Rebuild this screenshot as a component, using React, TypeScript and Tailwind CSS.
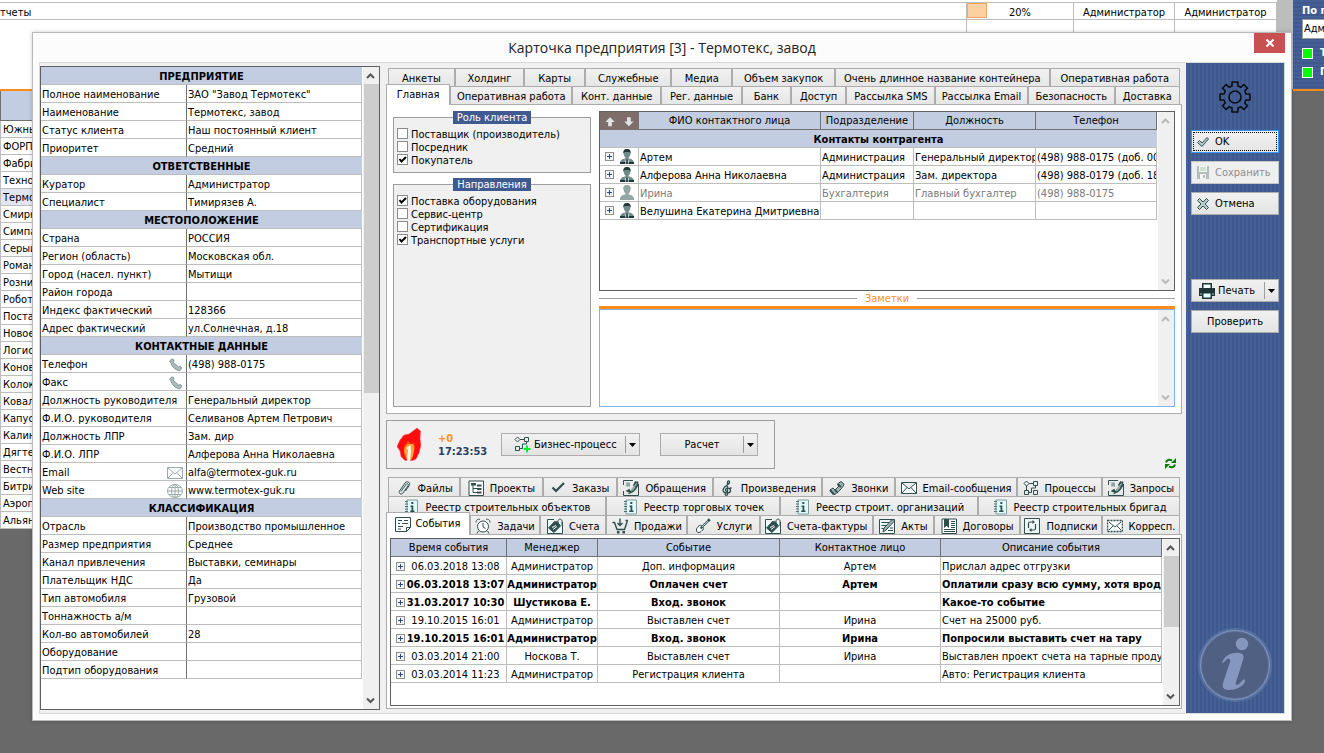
import type { ReactNode } from "react";

type IconName =
  | "clip" | "tree" | "check" | "request" | "clef" | "phone" | "mail" | "flow" | "book"
  | "events" | "clock" | "invoice" | "cart" | "guitar" | "act" | "contract" | "cycle" | "letter";

type Tab = { label: string; w: number; icon?: IconName; active?: boolean };

type InfoRow = { label: string; value?: string; icon?: "handset" | "mail" | "globe" };
type InfoGroup = { title: string; rows: InfoRow[] };

const companies = [
  "Южны", "ФОРП", "Фабри", "Техно", "Термо", "Смирн", "Симпа", "Серый",
  "Роман", "Розни", "Робот", "Поста", "Новое", "Логис", "Конов", "Колок",
  "Ковал", "Капус", "Калин", "Дягте", "Вестн", "Битри", "Аэроп", "Альян",
];

const info: InfoGroup[] = [
  {
    title: "ПРЕДПРИЯТИЕ",
    rows: [
      { label: "Полное наименование", value: 'ЗАО "Завод Термотекс"' },
      { label: "Наименование", value: "Термотекс, завод" },
      { label: "Статус клиента", value: "Наш постоянный клиент" },
      { label: "Приоритет", value: "Средний" },
    ],
  },
  {
    title: "ОТВЕТСТВЕННЫЕ",
    rows: [
      { label: "Куратор", value: "Администратор" },
      { label: "Специалист", value: "Тимирязев А." },
    ],
  },
  {
    title: "МЕСТОПОЛОЖЕНИЕ",
    rows: [
      { label: "Страна", value: "РОССИЯ" },
      { label: "Регион (область)", value: "Московская обл." },
      { label: "Город (насел. пункт)", value: "Мытищи" },
      { label: "Район города" },
      { label: "Индекс фактический", value: "128366" },
      { label: "Адрес фактический", value: "ул.Солнечная, д.18" },
    ],
  },
  {
    title: "КОНТАКТНЫЕ ДАННЫЕ",
    rows: [
      { label: "Телефон", value: "(498) 988-0175", icon: "handset" },
      { label: "Факс", icon: "handset" },
      { label: "Должность руководителя", value: "Генеральный директор" },
      { label: "Ф.И.О. руководителя", value: "Селиванов Артем Петрович" },
      { label: "Должность ЛПР", value: "Зам. дир" },
      { label: "Ф.И.О. ЛПР", value: "Алферова Анна Николаевна" },
      { label: "Email", value: "alfa@termotex-guk.ru", icon: "mail" },
      { label: "Web site", value: "www.termotex-guk.ru", icon: "globe" },
    ],
  },
  {
    title: "КЛАССИФИКАЦИЯ",
    rows: [
      { label: "Отрасль", value: "Производство промышленное" },
      { label: "Размер предприятия", value: "Среднее" },
      { label: "Канал привлечения", value: "Выставки, семинары" },
      { label: "Плательщик НДС", value: "Да" },
      { label: "Тип автомобиля", value: "Грузовой" },
      { label: "Тоннажность а/м" },
      { label: "Кол-во автомобилей", value: "28" },
      { label: "Оборудование" },
      { label: "Подтип оборудования" },
    ],
  },
];

const topTabs: Tab[][] = [
  [
    { label: "Анкеты", w: 66 },
    { label: "Холдинг", w: 69 },
    { label: "Карты", w: 60 },
    { label: "Служебные", w: 86 },
    { label: "Медиа", w: 60 },
    { label: "Объем закупок", w: 103 },
    { label: "Очень длинное название контейнера", w: 217 },
    { label: "Оперативная работа", w: 131 },
  ],
  [
    { label: "Главная", w: 64, active: true },
    { label: "Оперативная работа", w: 123 },
    { label: "Конт. данные", w: 89 },
    { label: "Рег. данные", w: 81 },
    { label: "Банк", w: 48 },
    { label: "Доступ", w: 55 },
    { label: "Рассылка SMS", w: 89 },
    { label: "Рассылка Email", w: 93 },
    { label: "Безопасность", w: 87 },
    { label: "Доставка", w: 65 },
  ],
];

const bottomTabs: Tab[][] = [
  [
    { label: "Файлы", w: 72, icon: "clip" },
    { label: "Проекты", w: 82, icon: "tree" },
    { label: "Заказы", w: 74, icon: "check" },
    { label: "Обращения", w: 96, icon: "request" },
    { label: "Произведения", w: 110, icon: "clef" },
    { label: "Звонки", w: 73, icon: "phone" },
    { label: "Email-сообщения", w: 122, icon: "mail" },
    { label: "Процессы", w: 85, icon: "flow" },
    { label: "Запросы", w: 78, icon: "request" },
  ],
  [
    { label: "Реестр строительных объектов", w: 218, icon: "book" },
    { label: "Реестр торговых точек", w: 174, icon: "book" },
    { label: "Реестр строит. организаций", w: 198, icon: "book" },
    { label: "Реестр строительных бригад", w: 202, icon: "book" },
  ],
  [
    { label: "События", w: 84, icon: "events", active: true },
    { label: "Задачи", w: 70, icon: "clock" },
    { label: "Счета", w: 66, icon: "invoice" },
    { label: "Продажи", w: 81, icon: "cart" },
    { label: "Услуги", w: 72, icon: "guitar" },
    { label: "Счета-фактуры", w: 114, icon: "invoice" },
    { label: "Акты", w: 61, icon: "act" },
    { label: "Договоры", w: 86, icon: "contract" },
    { label: "Подписки", w: 82, icon: "cycle" },
    { label: "Корресп.", w: 78, icon: "letter" },
  ],
];

const contacts = [
  { name: "Артем", dept: "Администрация", post: "Генеральный директор", phone: "(498) 988-0175 (доб. 00" },
  { name: "Алферова Анна Николаевна", dept: "Администрация", post: "Зам. директора", phone: "(498) 988-0179 (доб. 18" },
  { name: "Ирина", dept: "Бухгалтерия", post: "Главный бухгалтер", phone: "(498) 988-0175", muted: true },
  { name: "Велушина Екатерина Дмитриевна", dept: "", post: "", phone: "" },
];

const events = [
  { time: "06.03.2018 13:08", manager: "Администратор", event: "Доп. информация", contact: "Артем", text: "Прислал адрес отгрузки" },
  { time: "06.03.2018 13:07", manager: "Администратор", event: "Оплачен счет", contact: "Артем", text: "Оплатили сразу всю сумму, хотя врод", bold: true },
  { time: "31.03.2017 10:30", manager: "Шустикова Е.", event: "Вход. звонок", contact: "", text: "Какое-то событие", bold: true },
  { time: "19.10.2015 16:01", manager: "Администратор", event: "Выставлен счет", contact: "Ирина", text: "Счет на 25000 руб." },
  { time: "19.10.2015 16:01", manager: "Администратор", event: "Вход. звонок", contact: "Ирина", text: "Попросили выставить счет на тару", bold: true },
  { time: "03.03.2014 21:00", manager: "Носкова Т.", event: "Выставлен счет", contact: "Ирина", text: "Выставлен проект счета на тарные продун" },
  { time: "03.03.2014 11:23", manager: "Администратор", event: "Регистрация клиента", contact: "", text: "Авто: Регистрация клиента" },
];

const roles = [
  { label: "Поставщик (производитель)", on: false },
  { label: "Посредник", on: false },
  { label: "Покупатель", on: true },
];

const directions = [
  { label: "Поставка оборудования", on: true },
  { label: "Сервис-центр", on: false },
  { label: "Сертификация", on: false },
  { label: "Транспортные услуги", on: true },
];

const flowShapes = (
  <path d="M1 3.500 3.500 1 6 3.500 3.500 6ZM10.500 1.500h4v4h-4zM1.500 10.500h4v4h-4zM6 3.500h4.500M12.500 5.500v2.500h-4v4.500h-3" />
);

const iconShapes: Record<IconName, ReactNode> = {
  clip: <path d="M5 11.500 10 4.500c1-1.500 3-.5 2.200 1L7 13c-1.500 2.300-5 .5-3.500-2L9 3c2-2.800 6-.5 4.200 2.500L9.500 11" />,
  tree: (
    <>
      <path d="M1 1h14.500v14.500H1z" fill="#fff" />
      <path d="M5 5v7.500h4M5 8.500h4" />
      <path d="M3 3h5v2.500H3zM9 4.500h4.500v2H9zM9 8h4.500v2H9zM9 11.500h4.500v2H9z" fill="#2f4f4f" stroke="none" />
    </>
  ),
  check: <path d="M2.500 7.500 6 11l8-8" strokeWidth="2.200" />,
  request: (
    <>
      <path d="M.5 5V.5H10M15.500 4v11.500H.500V11" />
      <path d="M2 2.500h5v5L5.500 6 4 7 2.500 5 4 4Z" fill="#8fa3a3" stroke="none" />
      <path d="M14.500 1.500c.5 5-3 10.500-9 12M13 1.500 11 5l1.500 1.500M3.500 11.500 6 10l2 2.500" strokeWidth="1.800" />
      <path d="M12.500 5 8 11" stroke="#8fa3a3" strokeWidth="1.500" />
    </>
  ),
  clef: <path d="M8.500 15c-2 1-3-1-2-2M8.500 15V2c0-1.500 2.500-1.500 2 .5C10 5 4 6.500 4 10c0 3.500 7 4 7.500.8C12 8 6.500 7 6.500 10c0 1 1 1.500 1.500 1.500M11 8h1.500" strokeWidth="1.300" />,
  phone: (
    <>
      <path d="M1 10 4 8l2 2 4-4-1.500-2L12 1.500 15 4c.5 2-8 11-10 10.500Z" fill="#9fb3b3" />
      <path d="m1 10 4 4.500M8.500 4 12 7M6 10l2 2" strokeWidth="2" />
    </>
  ),
  mail: <path d="M.5 2.500h15v11H.500zM1 3l7 6 7-6M1 13l5-5.500M15 13l-5-5.500" fill="#fbffff" />,
  flow: (
    <>
      {flowShapes}
      <path d="M10.500 10.500h4v4h-4zM3.500 6v4.500" />
    </>
  ),
  book: (
    <>
      <path d="M4 1h10.500v14H4z" fill="#dffafa" stroke="#7f9b9b" />
      <path d="M2 2.500h3M2 5h3M2 7.500h3M2 10h3M2 12.500h3" stroke="#557070" />
      <path d="M8.300 3h2v2h-2zM7.500 6.500h2.800v5h1.200V13H7.200v-1.500h1.300V8h-1z" fill="#2f4f4f" stroke="none" />
    </>
  ),
  events: (
    <>
      <path d="M.5 1.500h15v10l-4 4H.500z" fill="#fff" />
      <path d="M15.500 11.500h-4v4M3 4.500h4M9 4.500h4M3 7.500h2M7 7.500h6M3 10.500h5M3 13h3" />
    </>
  ),
  clock: (
    <>
      <circle cx="8" cy="8.500" r="5.500" fill="#fff" />
      <path d="M8 5v4l2.500 1.500M1 4.500C1 2 3 .5 5 1.500M15 4.500c0-2.500-2-4-4-3M3.500 13 2 15.500M12.500 13l1.500 2.500" />
    </>
  ),
  invoice: (
    <>
      <path d="M.5 4v11.500h15V4M.500 4V1.500H7M15.500 4v7" fill="#f4ffff" />
      <path d="m1.500 10 6-6.500 3 .5 3 4-6.500 6.500z" fill="#2f4f4f" />
      <path d="M11 7V3c0-2.500 4-2.500 4 0v5M7 8l2 2" />
      <path d="m5 9.500 4-2M6 11.500l4-3" stroke="#fff" />
    </>
  ),
  cart: (
    <>
      <path d="M.5 4.500h2l2.500 7h7.500l3-9h-2M8 .500v6M5.500 5 8 7.500 10.500 5" strokeWidth="1.400" />
      <path d="M5 13h2.500v2.500H5zM10.500 13H13v2.500h-2.500z" fill="#2f4f4f" stroke="none" />
    </>
  ),
  guitar: (
    <>
      <path d="M1.500 12c-.5-2 1.500-2 2-4 2-2 6 1 4.500 4-2 .5-2 2.500-4 2.500C2.500 15 1.500 13.500 1.500 12Z" fill="#fff" />
      <path d="m5.500 10.500 8-8M13 1l2 2" strokeWidth="2" />
      <path d="m7 9 6-6" stroke="#b9cccc" />
    </>
  ),
  act: (
    <>
      <path d="M.5 1.500h15v14H.500z" fill="#eef6f6" />
      <path d="M2.500 4.500h8M2.500 7.500h5M2.500 10.500h3M9 12.500h5M11 10h3" />
      <path d="m4 14 1-4 8-8.500 2 2L7 12z" fill="#9fb3b3" />
    </>
  ),
  contract: (
    <>
      <path d="M1 1h14.500v14.500H1z" fill="#fff" />
      <path d="M3 1h5v9L5.500 8 3 10z" fill="#2f4f4f" stroke="none" />
      <path d="M10 3.500h4M10 5.500h4M10 7.500h4M10 9.500h4M3 11.500h11M3 13.500h11" />
    </>
  ),
  cycle: (
    <>
      <path d="M.5.500h15v15H.500z" fill="#eef6f6" />
      <path d="M4.500 10V5.500c0-1 .5-1.500 1.500-1.500h3M11.500 6v4.500c0 1-.5 1.500-1.500 1.500H7" strokeWidth="1.200" />
      <path d="M8.500 2v4L11 4zM7.500 10v4L5 12z" fill="#2f4f4f" stroke="none" />
    </>
  ),
  letter: (
    <>
      <path d="M.5 2.500h15v11H.500z" fill="#fff" strokeDasharray="2 1" strokeWidth="1.600" />
      <path d="m2 4 6 5 6-5M2 12l4-4M14 12l-4-4" />
    </>
  ),
};

function TabIcon({ name }: { name: IconName }) {
  return (
    <svg viewBox="0 0 16 16" className="w-4 h-4 shrink-0" fill="none" stroke="#2f4f4f" strokeWidth="1">
      {iconShapes[name]}
    </svg>
  );
}

function FieldIcon({ name }: { name: "handset" | "mail" | "globe" }) {
  return (
    <svg viewBox="0 0 16 14" className="w-4 h-3.5" fill="none" stroke="#9aabab" strokeWidth="1">
      {name === "handset" && (
        <path d="M2.500 3 5 .800 7 2 6.500 4.500 11.500 9l2-.5L15 10l-2.500 3-2.500-1C7.500 11 4.500 8 4 5Z" fill="#a9baba" stroke="#8a9c9c" />
      )}
      {name === "mail" && <path d="M.5 1.500h15v11H.500zM1 2l7 6 7-6M1 12l5-5M15 12l-5-5" />}
      {name === "globe" && (
        <>
          <ellipse cx="8" cy="7" rx="7.500" ry="6.500" />
          <ellipse cx="8" cy="7" rx="3.500" ry="6.500" />
          <path d="M8 .500v13M.500 7h15M2 3.500h12M2 10.500h12" />
        </>
      )}
    </svg>
  );
}

function PersonIcon({ muted }: { muted?: boolean }) {
  const dark = muted ? "#93a5a5" : "#1f3838";
  const mid = muted ? "#93a5a5" : "#6f8a8a";
  return (
    <svg viewBox="0 0 14 15" className="w-3.5 h-[15px]">
      <path d="M0 15c0-3 1-4.500 4.500-5.500h5C13 10.500 14 12 14 15z" fill={mid} />
      <path d="M3.500 3.500C3.500 1 5 0 7 0s3.500 1 3.500 3.500c0 3-1.500 5.500-3.500 5.500S3.500 6.500 3.500 3.500Z" fill={mid} />
      <path d="M5.500 8h3v3h-3z" fill={mid} />
      <path d="M3.500 4.500C3 1 5 0 7 0s4 1 3.500 4.500C9.500 2.500 8.500 3 7 3s-2.500-.5-3.500 1.500ZM0 15v-2h14v2z" fill={dark} />
      <path d="m4.500 9.500 2 3h1l2-3L8.500 15h-3z" fill={muted ? "#93a5a5" : "#c9d6d6"} />
      <path d="M6.500 10.500h1L8 15H6z" fill={dark} />
    </svg>
  );
}

function Expander() {
  return (
    <button type="button" aria-label="Развернуть" className="block w-[9px] h-[9px] shrink-0 border border-[#8f8f8f] bg-[#f4f4f4]">
      <svg viewBox="0 0 7 7" className="w-[7px] h-[7px]" stroke="#2f4a8c" strokeWidth="1">
        <path d="M1 3.500h5M3.500 1v5" />
      </svg>
    </button>
  );
}

function ScrollBar({ thumb, faded }: { thumb?: string; faded?: boolean }) {
  const color = faded ? "#b9b9b9" : "#555";
  return (
    <div className="w-4 shrink-0 bg-[#f0f0f0] flex flex-col items-center">
      <svg viewBox="0 0 16 17" className="w-4 h-[17px]" fill="none" stroke={color} strokeWidth="2">
        <path d="m4 11 3.500-3.500L11 11" />
      </svg>
      {thumb && <div className={`w-[15px] bg-[#cdcdcd] ${thumb}`} />}
      <svg viewBox="0 0 16 17" className="w-4 h-[17px] mt-auto" fill="none" stroke={color} strokeWidth="2">
        <path d="m4 6.500 3.500 3.500L11 6.500" />
      </svg>
    </div>
  );
}

function TabRow({ tabs, tall }: { tabs: Tab[]; tall?: boolean }) {
  return (
    <div className={`flex items-end ${tall ? "h-[19px]" : "h-[18px]"} ${tabs[0].active ? "-ml-0.5" : ""}`} role="tablist">
      {tabs.map((tab, i) => (
        <button
          key={i}
          type="button"
          role="tab"
          aria-selected={!!tab.active}
          style={{ flexGrow: tab.w }}
          className={
            tab.active
              ? `relative z-10 basis-0 min-w-0 flex items-center justify-center gap-1 -mb-px bg-white border border-b-0 border-[#acacac] ${tall ? "h-[23px]" : "h-[21px]"}`
              : `basis-0 min-w-0 h-full flex items-center justify-center border border-b-0 border-[#acacac] bg-linear-to-b from-[#f1f1f1] to-[#e6e6e6] pt-px ${tall ? "gap-1.5" : ""}`
          }
        >
          {tab.icon && <TabIcon name={tab.icon} />}
          <span className={tab.active ? "" : "pt-0.5"}>{tab.label}</span>
        </button>
      ))}
    </div>
  );
}

function CheckGroup({ title, items, className }: { title: string; items: { label: string; on: boolean }[]; className: string }) {
  return (
    <fieldset className={`border border-[#9d9d9d] bg-[#f0f0f0] px-[3px] pt-[3px] pb-1.5 ${className}`}>
      <legend className="mx-auto h-[13px] px-1 leading-[14px] bg-[#3f5a8f] text-white">{title}</legend>
      {items.map((item) => (
        <label key={item.label} className="flex items-center h-[13px] gap-[3px] whitespace-nowrap">
          <span className="relative flex w-[11px] h-[11px]">
            <input
              type="checkbox"
              defaultChecked={item.on}
              className="peer appearance-none w-[11px] h-[11px] border border-[#8c8c8c] bg-white"
            />
            <svg viewBox="0 0 11 11" className="absolute inset-0 hidden peer-checked:block pointer-events-none" fill="none" stroke="#000" strokeWidth="2">
              <path d="M2.500 5 4.500 7.500 9 3" />
            </svg>
          </span>
          <span className="pt-0.5">{item.label}</span>
        </label>
      ))}
    </fieldset>
  );
}

type ActionButtonProps = {
  children: ReactNode;
  className?: string;
  tone?: "normal" | "focused" | "disabled";
};

function ActionButton({ children, className = "", tone = "normal" }: ActionButtonProps) {
  const tones = {
    normal: "border-[#acacac] from-[#f1f1f1] to-[#e4e4e4]",
    focused: "border-[#3399ff] from-[#f1f1f1] to-[#e4e4e4]",
    disabled: "border-[#c6c6c6] from-[#efefef] to-[#efefef] text-[#8e8e8e]",
  };
  return (
    <button
      type="button"
      disabled={tone === "disabled"}
      className={`flex items-center h-[23px] border bg-linear-to-b ${tones[tone]} ${className}`}
    >
      {children}
    </button>
  );
}

function DropArrow() {
  return (
    <span className="ml-auto h-[17px] w-3.5 pl-px pr-px flex items-center justify-center border-l border-[#9d9d9d]">
      <svg viewBox="0 0 7 4" className="w-[7px] h-1">
        <path d="M0 0h7L3.500 4z" />
      </svg>
    </span>
  );
}

function Backdrop() {
  const cell = "h-[17px] border-b border-r border-[#bdbdbd] bg-white leading-[19px]";
  return (
    <div className="absolute inset-0 flex items-start">
      <div className="flex-1 min-w-0">
        <div className="flex flex-col h-[89px] bg-white">
          <div className="flex h-[3px] border-b border-[#bdbdbd]" />
          <div className="flex text-center whitespace-nowrap">
            <div className={`${cell} flex-1 text-left`}>тчеты</div>
            <div className={`${cell} w-[107px] relative`}>
              <span className="absolute left-0 top-0 w-5 h-[15px] bg-[#fdd0a2] border border-[#f0a868]" />
              20%
            </div>
            <div className={`${cell} w-[101px]`}>Администратор</div>
            <div className={`${cell} w-[102px]`}>Администратор</div>
          </div>
          <div className="flex flex-1">
            <div className="flex-1 border-r border-[#bdbdbd]" />
            <div className="w-[107px] border-r border-[#bdbdbd]" />
            <div className="w-[101px] border-r border-[#bdbdbd]" />
            <div className="w-[102px] border-r border-[#bdbdbd]" />
          </div>
        </div>
        <div className="w-9 border-t-2 border-[#ff8c1a]">
          <div className="h-[30px] bg-[#c3cde2] border-l border-b border-[#707070]" />
          <ul className="whitespace-nowrap leading-[18px]">
            {companies.map((name, i) => (
              <li key={name} className={`h-[17px] pl-0.5 border-l border-b border-[#bdbdbd] ${i === 4 ? "bg-[#e1e5f2]" : "bg-white"}`}>
                {name}
              </li>
            ))}
          </ul>
        </div>
      </div>
      <div className="w-4 h-[89px] bg-[#bdbdbd]" />
      <div className="w-[31px] h-[91px] overflow-hidden pl-[9px] text-white whitespace-nowrap border-b-2 border-[#ff8c1a] bg-[repeating-linear-gradient(180deg,#456096_0px,#456096_2px,#3f598c_2px,#3f598c_4px)]">
        <div className="pt-[3px] font-bold">По п</div>
        <div className="h-5 border border-r-0 border-[#9d9d9d] bg-white pl-px leading-[18px] text-black">Адм</div>
        <div className="mt-1.5 flex items-center gap-[7px] h-4">
          <span className="w-[11px] h-[11px] border border-white bg-[#00ff00] shrink-0" />
          <b>Т</b>
        </div>
        <div className="mt-[3px] flex items-center gap-[7px] h-4">
          <span className="w-[11px] h-[11px] border border-white bg-[#00ff00] shrink-0" />
          <b>П</b>
        </div>
      </div>
    </div>
  );
}

function InfoPanel() {
  return (
    <div className="w-[340px] shrink-0 flex border border-[#606060] bg-white">
      <div className="flex-1 min-w-0 pr-px">
        <table className="w-full table-fixed border-separate border-spacing-0 leading-[15px]">
          <colgroup>
            <col className="w-[146px]" />
            <col />
          </colgroup>
          {info.map((group) => (
            <tbody key={group.title}>
              <tr>
                <th colSpan={2} className="h-[18px] p-0 pt-0.5 bg-[#c3cde2] border-b border-[#bdbdbd]">{group.title}</th>
              </tr>
              {group.rows.map((row) => (
                <tr key={row.label}>
                  <th scope="row" className="h-[18px] p-0 pt-0.5 pl-px font-normal text-left whitespace-nowrap border-b border-r border-b-[#bdbdbd] border-r-[#707070]">
                    <span className="flex items-center justify-between pr-[3px]">
                      {row.label}
                      {row.icon && <FieldIcon name={row.icon} />}
                    </span>
                  </th>
                  <td className="h-[18px] p-0 pt-0.5 pl-px whitespace-nowrap border-b border-r border-[#bdbdbd]">{row.value}</td>
                </tr>
              ))}
            </tbody>
          ))}
        </table>
      </div>
      <ScrollBar thumb="h-[309px]" />
    </div>
  );
}

function ContactsTable() {
  const head = "h-[18px] p-0 font-normal border-r border-b border-[#707070] bg-[#c3cde2]";
  const cell = "h-[18px] p-0 pt-0.5 pl-px overflow-hidden whitespace-nowrap border-r border-b border-[#bdbdbd]";
  return (
    <div className="h-[180px] flex border border-[#606060] bg-white">
      <div className="flex-1 min-w-0 pr-px">
        <table className="w-full table-fixed border-separate border-spacing-0 leading-[15px]">
          <colgroup>
            <col className="w-[39px]" />
            <col className="w-[182px]" />
            <col className="w-[93px]" />
            <col className="w-[122px]" />
            <col />
          </colgroup>
          <thead>
            <tr>
              <th className="h-[18px] p-0 bg-[#7d6e69]">
                <svg viewBox="0 0 38 18" className="w-[38px] h-[17px]" fill="#e2e2e2">
                  <path d="m9.500 4.500 5 5h-3V14h-4V9.500h-3zM29.500 14l-5-5h3V4.500h4V9h3z" />
                </svg>
              </th>
              <th className={head}>ФИО контактного лица</th>
              <th className={head}>Подразделение</th>
              <th className={head}>Должность</th>
              <th className={head}>Телефон</th>
            </tr>
          </thead>
          <tbody>
            <tr>
              <th colSpan={5} className="h-[18px] p-0 pt-0.5 bg-[#c3cde2] border-b border-[#bdbdbd]">Контакты контрагента</th>
            </tr>
            {contacts.map((c) => (
              <tr key={c.name} className={c.muted ? "text-[#7a7a7a]" : ""}>
                <td className="h-[18px] p-0 pl-px border-r border-b border-[#bdbdbd]">
                  <span className="flex items-center gap-1.5 pl-1">
                    <Expander />
                    <PersonIcon muted={c.muted} />
                  </span>
                </td>
                <td className={cell}>{c.name}</td>
                <td className={cell}>{c.dept}</td>
                <td className={cell}>{c.post}</td>
                <td className={cell}>{c.phone}</td>
              </tr>
            ))}
          </tbody>
        </table>
      </div>
      <ScrollBar faded />
    </div>
  );
}

function EventsTable() {
  const head = "h-[18px] p-0 font-normal border-r border-b border-[#707070] bg-[#c3cde2]";
  const cell = "h-[18px] p-0 pt-0.5 overflow-hidden whitespace-nowrap border-r border-b border-[#bdbdbd]";
  return (
    <div className="flex-1 flex border border-[#606060] bg-white">
      <div className="flex-1 min-w-0 pr-px">
        <table className="w-full table-fixed border-separate border-spacing-0 text-center leading-[15px]">
          <colgroup>
            <col className="w-[116px]" />
            <col className="w-[91px]" />
            <col className="w-[182px]" />
            <col className="w-[161px]" />
            <col />
          </colgroup>
          <thead>
            <tr>
              <th className={head}>Время события</th>
              <th className={head}>Менеджер</th>
              <th className={head}>Событие</th>
              <th className={head}>Контактное лицо</th>
              <th className={head}>Описание события</th>
            </tr>
          </thead>
          <tbody>
            {events.map((e, i) => (
              <tr key={i} className={e.bold ? "font-bold" : ""}>
                <td className={cell}>
                  <span className="flex items-center pl-[5px]">
                    <Expander />
                    <span className="flex-1">{e.time}</span>
                  </span>
                </td>
                <td className={cell}>{e.manager}</td>
                <td className={cell}>{e.event}</td>
                <td className={cell}>{e.contact}</td>
                <td className={`${cell} text-left pl-px`}>{e.text}</td>
              </tr>
            ))}
          </tbody>
        </table>
      </div>
      <ScrollBar thumb="h-[71px]" />
    </div>
  );
}

function Flame() {
  return (
    <svg viewBox="0 0 24 33" className="w-6 h-[33px]">
      <path d="M20 0 23.500 3l-.5 8 1 6-2 8-3 6-3 1.500H8L4 28.500 3 23 0 18.500 3 12l4-5 5-1 4-3z" fill="#ff0d0d" stroke="#ff4a6a" strokeWidth="0.500" />
      <path d="m11 13 3 3 3-1 1 5-2 8-4 3H9l-2-5v-7l2-3z" fill="#ff5410" />
      <path d="m11 16 5 0 1 5-1 7-2 4h-4l-1-4-2-5 1-4z" fill="#ffa23a" />
      <path d="m9.500 20 4-3 .5 6-1 10h-3l1-11z" fill="#fffbe6" />
    </svg>
  );
}

function ToolStrip() {
  return (
    <div className="mt-1.5 flex items-end justify-between">
      <div className="w-[389px] h-[49px] flex items-center pl-2.5 border border-[#9d9d9d]">
        <Flame />
        <div className="w-[62px] ml-[17px] mr-px font-bold leading-[13px]">
          <div className="text-[#ff9026]">+0</div>
          <div className="text-[#2c3f63]">17:23:53</div>
        </div>
        <ActionButton className="w-[139px] justify-center pl-3">
          <svg viewBox="0 0 17 17" className="w-[17px] h-[17px] mr-[3px]" fill="none" stroke="#2f4f4f">
            {flowShapes}
            <path d="M13 9.500v7M9.500 13h7" stroke="#00f02c" strokeWidth="2" />
          </svg>
          Бизнес-процесс
          <DropArrow />
        </ActionButton>
        <ActionButton className="w-[98px] ml-5">
          <span className="flex-1">Расчет</span>
          <DropArrow />
        </ActionButton>
      </div>
      <button type="button" aria-label="Обновить" className="mr-1.5">
        <svg viewBox="0 0 11 11" className="w-[11px] h-[11px]" fill="none" stroke="#0a7d0a" strokeWidth="2">
          <path d="M1 4.500C1.500 2 4 1 7 2.500M10 6.500C9.500 9 7 10 4 8.500" />
          <path d="M6 5h5V0zM5 6H0v5z" fill="#0a7d0a" stroke="none" />
        </svg>
      </button>
    </div>
  );
}

function SideBar() {
  return (
    <aside className="w-[98px] shrink-0 flex flex-col px-[5px] bg-[repeating-linear-gradient(90deg,#456096_0px,#456096_2px,#3f598c_2px,#3f598c_4px)]">
      <svg viewBox="0 0 32 32" className="w-8 h-8 mt-[18px] mx-auto" fill="none" stroke="#0a0d14" strokeWidth="1.600" strokeLinejoin="round">
        <path d="M13 1h6v4l3 1.300L24.800 3.500 28.500 7.200 25.700 10 27 13h4v6h-4l-1.300 3 2.800 2.800-3.700 3.700L22 25.700 19 27v4h-6v-4l-3-1.300-2.800 2.800-3.700-3.700L6.300 22 5 19H1v-6h4l1.300-3L3.500 7.200 7.200 3.500 10 6.300 13 5z" />
        <circle cx="16" cy="16" r="6" />
      </svg>
      <ActionButton tone="focused" className="mt-[17px] p-px">
        <span className="flex flex-1 h-full items-center gap-1.5 pl-[3px] border border-dotted border-black">
          <svg viewBox="0 0 12 10" className="w-3 h-2.5" fill="#b9cccc" stroke="#2f4f4f">
            <path d="m.5 5.500 2-2L5 6l5-5.500 1.500 1.500L5 9.500z" />
          </svg>
          OK
        </span>
      </ActionButton>
      <ActionButton tone="disabled" className="mt-2 pl-[5px] gap-1.5">
        <svg viewBox="0 0 12 13" className="w-3 h-[13px] shrink-0">
          <path d="M0 0h12v13H0z" fill="#b4bdb9" />
          <path d="M2 0h8v6H2zM3 8h6v5H3z" fill="#f4f6f5" />
          <path d="M3 2h6M3 4h6" stroke="#a5cfa8" />
          <path d="M6 9h2v3H6z" fill="#b4bdb9" />
        </svg>
        Сохранить
      </ActionButton>
      <ActionButton className="mt-2 pl-[5px] gap-1.5">
        <svg viewBox="0 0 12 12" className="w-3 h-3" fill="#b9cccc" stroke="#2f4f4f">
          <path d="m.5 2.500 2-2L6 4 9.500.500l2 2L8 6l3.500 3.500-2 2L6 8l-3.500 3.500-2-2L4 6z" />
        </svg>
        Отмена
      </ActionButton>
      <ActionButton className="mt-16 pl-[7px] gap-[3px]">
        <svg viewBox="0 0 16 16" className="w-4 h-4" fill="#1f3535">
          <path d="M3 0h10v5H3z" />
          <path d="M4.500 1.500h7V5h-7z" fill="#f4ffff" />
          <path d="M0 5h16v8H0z" />
          <path d="M3 9h10v7H3z" />
          <path d="M4.500 10.500h7v4h-7z" fill="#e8ffff" />
          <path d="M1 10h2v2H1zM13 10h2v2h-2z" fill="#5f8080" />
        </svg>
        Печать
        <DropArrow />
      </ActionButton>
      <ActionButton className="mt-2 justify-center">Проверить</ActionButton>
      <svg viewBox="0 0 76 76" className="w-[76px] h-[76px] mt-auto mb-[10px] mx-auto">
        <circle cx="38" cy="38" r="34.500" fill="#4f6082" />
        <circle cx="38" cy="38" r="35" fill="none" stroke="#7c93c4" strokeWidth="4" opacity="0.350" />
        <circle cx="38" cy="38" r="34.500" fill="none" stroke="#8395bd" strokeWidth="1" />
        <circle cx="45" cy="17" r="6.200" fill="#8697bf" />
        <path d="M25 36c2-7 9-11 18-10 4 1 4 4 3 7l-7 22c-1 3 1 4 3 2l5-5c1 1 1 2 1 3-3 5-9 8-16 8-6 0-7-3-6-7l7-21c1-3-1-4-3-3l-4 4z" fill="#8697bf" />
      </svg>
    </aside>
  );
}

export default function App() {
  return (
    <div className="relative h-screen overflow-hidden bg-[#696969] font-['DejaVu_Sans_Condensed','DejaVu_Sans',sans-serif] text-[11px] leading-4 text-black">
      <Backdrop />
      <div role="dialog" aria-labelledby="card-title" className="absolute inset-x-8 top-8 flex flex-col h-[689px] px-1.5 pb-1.5 border border-[#b9b9b9] bg-[#fcfcfc] shadow-[0_0_4px_rgba(0,0,0,0.2)]">
        <header className="flex items-start justify-center h-[29px]">
          <h1 id="card-title" className="flex-1 pl-[31px] pt-1 text-center font-['Open_Sans',sans-serif] text-[14px] leading-[22px] text-[#222]">
            Карточка предприятия [3] - Термотекс, завод
          </h1>
          <button type="button" aria-label="Закрыть" className="w-[31px] h-5 flex items-center justify-center bg-[#c75050]">
            <svg viewBox="0 0 8 8" className="w-2 h-2" stroke="#fff" strokeWidth="2">
              <path d="m.5.500 7 7M7.500.500l-7 7" />
            </svg>
          </button>
        </header>
        <div className="flex-1 min-h-0 flex border border-[#d9d9d9] bg-[#f0f0f0]">
          <div className="flex pt-[3px] pb-[3px]">
            <InfoPanel />
          </div>
          <main className="flex-1 min-w-0 flex flex-col pt-[5px] pb-1 pl-1.5 pr-1">
            <div className="px-0.5">
              {topTabs.map((tabs, i) => (
                <TabRow key={i} tabs={tabs} />
              ))}
            </div>
            <section className="flex gap-2 p-1.5 border border-[#acacac] bg-white">
              <div className="w-[198px] flex flex-col">
                <CheckGroup title="Роль клиента" items={roles} className="" />
                <CheckGroup title="Направления" items={directions} className="mt-[5px] flex-1" />
              </div>
              <div className="flex-1 min-w-0 flex flex-col">
                <ContactsTable />
                <div className="flex items-center gap-2 h-[15px] text-[#ff9026]">
                  <span className="flex-1 border-t border-[#9d9d9d]" />
                  <label htmlFor="notes">Заметки</label>
                  <span className="flex-1 border-t border-[#9d9d9d]" />
                </div>
                <div className="border-t-[3px] border-[#ff8c1a]">
                  <div className="flex h-[98px] border border-[#7eb4ea] bg-white">
                    <textarea id="notes" className="flex-1 resize-none outline-none px-1" />
                    <ScrollBar faded />
                  </div>
                </div>
              </div>
            </section>
            <ToolStrip />
            <div className="px-0.5 mt-2">
              {bottomTabs.map((tabs, i) => (
                <TabRow key={i} tabs={tabs} tall />
              ))}
            </div>
            <section className="flex-1 flex p-[3px] pr-px pb-0.5 border border-[#acacac] bg-white">
              <EventsTable />
            </section>
          </main>
          <SideBar />
        </div>
      </div>
    </div>
  );
}
